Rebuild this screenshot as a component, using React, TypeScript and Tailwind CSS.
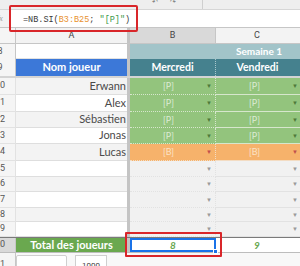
import React from "react";

type Row = { n: string; name: string; v: "" | "P" | "B"; h: number };

const rows: Row[] = [
  { n: "10", name: "Erwann", v: "P", h: 17 },
  { n: "11", name: "Alex", v: "P", h: 17 },
  { n: "12", name: "Sébastien", v: "P", h: 16 },
  { n: "13", name: "Jonas", v: "P", h: 16 },
  { n: "14", name: "Lucas", v: "B", h: 17 },
  { n: "15", name: "", v: "", h: 16 },
  { n: "16", name: "", v: "", h: 15 },
  { n: "17", name: "", v: "", h: 16 },
  { n: "18", name: "", v: "", h: 14 },
  { n: "19", name: "", v: "", h: 15 },
];

function RowHead({ n, className = "" }: { n: string; className?: string }) {
  return (
    <div className={`w-[16px] shrink-0 overflow-hidden border-r border-[#c6c6c6] ${className}`}>
      <div className="w-[32px] ml-[-16px] h-full flex items-center justify-center text-[9px] text-[#555] font-['Roboto',sans-serif]">
        {n}
      </div>
    </div>
  );
}

function Divider() {
  return <div className="w-[3px] shrink-0 bg-[#c4c4c4]" />;
}

function ValueCell({ v, right }: { v: Row["v"]; right?: boolean }) {
  const bg = v === "P" ? "bg-[#93c47d]" : v === "B" ? "bg-[#f6b26b]" : "bg-[#f1f1f1]";
  const txt = v === "P" ? "text-[#dcead4]" : "text-[#fbe2c6]";
  const tri = v === "P" ? "text-[#4e7a3a]" : v === "B" ? "text-[#c0504d]" : "text-[#9a9a9a]";
  const line = v === "P" ? "border-[#d6e6cc]" : v === "B" ? "border-[#f3dcc3]" : "border-[#e2e2e2]";
  return (
    <div
      className={`relative h-full ${right ? "w-[85px] shrink-0" : "w-[86px] shrink-0 border-r border-dotted border-[#cfd8cc]"} ${bg} border-b ${line} flex items-center`}
    >
      {v && (
        <span className={`w-full text-center pr-[8px] text-[9px] font-['Lato',sans-serif] ${txt}`}>[{v}]</span>
      )}
      <span className={`absolute right-[3px] top-1/2 -translate-y-1/2 text-[6px] leading-none ${tri}`}>▼</span>
    </div>
  );
}

export default function App() {
  return (
    <div className="w-[300px] h-[266px] overflow-hidden bg-white relative font-['Lato',sans-serif]">
      {/* toolbar remnant */}
      <div className="h-[10px] bg-[#eeeeee] border-b border-[#d6d6d6] flex items-start">
        <div className="ml-[152px] flex gap-[12px] text-[7px] leading-none text-[#6b6b6b] -mt-[2px]">
          <span>↶</span>
          <span>↷</span>
        </div>
        <div className="ml-[26px] h-[9px] border-l border-[#cfcfcf]" />
      </div>
      {/* formula bar */}
      <div className="h-[17px] flex items-center bg-white">
        <div className="w-[9px] h-full bg-[#f2f2f2] overflow-hidden flex items-center">
          <span className="ml-[-3px] italic text-[8px] text-[#9a9a9a] font-['Liberation_Serif',serif]">fx</span>
        </div>
        <div className="pl-[14px] pt-[3px] text-[8.5px] text-[#3a3a3a] font-['Liberation_Mono',monospace] whitespace-pre">
          =NB.SI(<span className="text-[#e8912d]">B3:B25</span>; <span className="text-[#3c9a4a]">"[P]"</span>)
        </div>
      </div>
      {/* column headers */}
      <div className="flex h-[17px] border-y border-[#c6c6c6] text-[9px] text-[#444] font-['Roboto',sans-serif]">
        <div className="w-[16px] shrink-0 bg-[#f5f5f5] border-r border-[#c6c6c6]" />
        <div className="w-[111px] shrink-0 bg-[#f3f3f3] flex items-center justify-center">A</div>
        <Divider />
        <div className="w-[86px] shrink-0 bg-[#d9d9d9] flex items-center justify-center border-r border-[#c6c6c6]">B</div>
        <div className="flex-1 bg-[#f3f3f3] flex items-center justify-center pr-[2px]">C</div>
      </div>
      {/* Semaine row */}
      <div className="flex h-[15px]">
        <RowHead n="8" className="bg-[#f5f5f5]" />
        <div className="w-[111px] shrink-0 bg-white border-b border-[#e2e2e2]" />
        <Divider />
        <div className="flex-1 bg-[#a2c4c9] flex items-center pl-[106px] text-[10px] font-bold text-white">
          Semaine 1
        </div>
      </div>
      {/* Nom joueur row */}
      <div className="flex h-[19px] border-b-2 border-[#d4d4d4]">
        <RowHead n="9" className="bg-[#f5f5f5] text-[#3c78d8]" />
        <div className="w-[111px] shrink-0 bg-[#3c78d8] flex items-center justify-center text-[11px] font-bold text-white">
          Nom joueur
        </div>
        <Divider />
        <div className="w-[86px] shrink-0 bg-[#45818e] flex items-center justify-center text-[10.5px] font-bold text-white border-r border-dotted border-[#a9c7cc]">
          Mercredi
        </div>
        <div className="w-[85px] shrink-0 bg-[#45818e] flex items-center justify-center text-[10.5px] font-bold text-white pr-[2px]">
          Vendredi
        </div>
      </div>
      {/* data rows */}
      {rows.map((r, i) => {
        const gray = i % 2 === 0;
        return (
          <div key={r.n} className="flex" style={{ height: r.h }}>
            <RowHead n={r.n} className="bg-[#f5f5f5] border-b border-[#e2e2e2]" />
            <div
              className={`w-[111px] shrink-0 ${gray ? "bg-[#f3f3f3]" : "bg-white"} border-b border-[#dedede] flex items-center justify-end pr-[1px] text-[11px] text-[#4a4a4a]`}
            >
              {r.name}
            </div>
            <Divider />
            <ValueCell v={r.v} />
            <ValueCell v={r.v} right />
          </div>
        );
      })}
      {/* total row */}
      <div className="flex h-[16px] border-t border-[#7a7a7a] border-b border-b-[#bdbdbd]">
        <RowHead n="20" className="bg-[#d9d9d9]" />
        <div className="w-[111px] shrink-0 bg-[#6aa84f] flex items-center justify-center text-[11px] font-bold text-white">
          Total des joueurs
        </div>
        <Divider />
        <div className="relative w-[86px] shrink-0 bg-white border-2 border-[#1a73e8] flex items-center justify-center text-[10px] italic font-bold text-[#6aa84f]">
          8
          <div className="absolute right-[-4px] bottom-[-4px] w-[5px] h-[5px] bg-[#1a73e8] border border-white" />
        </div>
        <div className="w-[85px] shrink-0 bg-white flex items-center justify-center pr-[3px] text-[10px] italic font-bold text-[#6aa84f]">
          9
        </div>
      </div>
      {/* bottom: add rows */}
      <div className="flex h-[24px] bg-[#f8f8f8]">
        <RowHead n="21" className="bg-[#f5f5f5] text-[#cc0000]" />
        <div className="flex items-start pt-[2px] gap-[8px]">
          <div className="w-[51px] h-[22px] bg-white border border-[#cfcfcf] rounded-[2px] flex items-center justify-center pt-[8px] text-[8px] text-[#444]">
            Ajouter
          </div>
          <div className="w-[32px] h-[18px] bg-white border border-[#cfcfcf] flex items-start justify-center pt-[6px] text-[8px] leading-none text-[#444] font-['Roboto',sans-serif]">
            1000
          </div>
        </div>
      </div>
      {/* annotation boxes */}
      <div className="absolute left-[9px] top-[5px] w-[129px] h-[27px] border-2 border-[#d9262a] rounded-[2px]" />
      <div className="absolute left-[125px] top-[232px] w-[97px] h-[25px] border-2 border-[#d9262a] rounded-[1px]" />
    </div>
  );
}
